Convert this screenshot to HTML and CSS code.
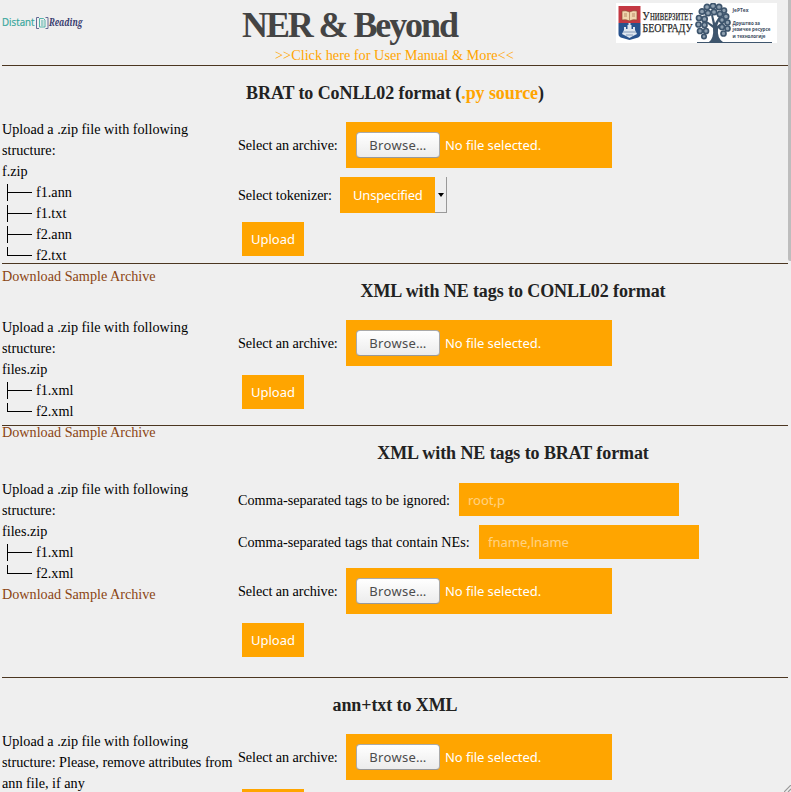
FILE: index.html
```
<!DOCTYPE html>
<html lang="en">
<head>
<meta charset="utf-8">
<title>NER &amp; Beyond</title>
<link rel="stylesheet" href="styles.css">
</head>
<body>
<header class="top">
  <a class="distant"><svg width="90" height="18" viewBox="0 0 90 18">
    <text class="d1" x="0" y="12" textLength="32.500" lengthAdjust="spacingAndGlyphs">Distant</text>
    <path d="M37 3.500h-2.500v11H37M43.500 3.500H46v11h-2.500" fill="none" stroke="#666994"/>
    <path d="M37.500 4.500h4l1.500 1.500v7h-5.500zM39 7h2.500M39 9h2.500M39 11h2.500" fill="none" stroke="#42aaa2" stroke-width=".9"/>
    <text class="d2" x="47" y="12" textLength="33.500" lengthAdjust="spacingAndGlyphs">Reading</text>
  </svg></a>
  <div class="brand"><h1>NER &amp; Beyond</h1><a class="manual">&gt;&gt;Click here for User Manual &amp; More&lt;&lt;</a></div>
  <svg class="partners" width="161" height="40" viewBox="0 0 161 40">
    <path fill="#fff" d="M0 0h161v40H0z"/>
    <path fill="#c43842" d="M2.500 3h22v17h-22z"/>
    <path fill="#28528d" d="M2.500 20h22v11q0 3-4 4l-7 2-7-2q-4-1-4-4z"/>
    <path fill="#f0d6ae" stroke="#8c4a32" stroke-width=".7" d="M6 8q4-1 7.500 1Q17 7 21 8v9q-4-1-7.500 1Q10 16 6 17z"/>
    <path d="M13.500 9v9M8 11h3M8 13h3M16 11h3M16 13h3" stroke="#a46c48" stroke-width=".7"/>
    <path fill="#dfe6ef" d="M6 31l2-4v-3h2v2h1.500v-4h1v-2h2v2h1v4H17v-2h2v3l2 4-4 2-3.500 2-3.500-2z"/>
    <path d="M7 29h13M10 32h7" stroke="#8298b7"/>
    <text class="uni" x="26.500" y="17" font-size="12" textLength="7" lengthAdjust="spacingAndGlyphs">У</text>
    <text class="uni" x="34" y="17" font-size="10" textLength="42.500" lengthAdjust="spacingAndGlyphs">НИВЕРЗИТЕТ</text>
    <text class="uni" x="26.500" y="28.500" font-size="13" textLength="50" lengthAdjust="spacingAndGlyphs">БЕОГРАДУ</text>
    <path fill="#3e556d" d="M93 39q5-4 4-14l-9-7 1-1 8 5-2-10h2l2 8 5-8 1 1-4 10 8-6 1 1-8 8q-1 9 5 13z"/>
    <g fill="#8fa0b0" stroke="#3e556d" stroke-width="1.700">
      <circle cx="91" cy="4" r="2.700"/><circle cx="97" cy="3" r="2.700"/><circle cx="103" cy="4" r="2.700"/><circle cx="108" cy="7.500" r="2.500"/>
      <circle cx="86" cy="8.500" r="2.700"/><circle cx="92" cy="10" r="2.700"/><circle cx="98" cy="9" r="2.700"/><circle cx="104" cy="11" r="2.700"/><circle cx="110" cy="13.500" r="2.700"/>
      <circle cx="83" cy="15" r="2.500"/><circle cx="88.500" cy="16" r="2.700"/><circle cx="106" cy="17" r="2.500"/><circle cx="111.500" cy="19.500" r="2.500"/>
      <circle cx="82.500" cy="21.500" r="2.500"/><circle cx="88.500" cy="22" r="2.500"/><circle cx="106" cy="24" r="2.500"/><circle cx="111.500" cy="25.500" r="2.500"/><circle cx="84" cy="28" r="2.500"/><circle cx="90" cy="28" r="2.500"/><circle cx="107.500" cy="30.500" r="2.500"/><circle cx="88" cy="33.500" r="2.200"/>
    </g>
    <path d="M81 39.500h75" stroke="#3e556d"/>
    <g class="society"><text x="116.500" y="9" textLength="16" lengthAdjust="spacingAndGlyphs">ЈеРТех</text><text x="116.500" y="21.500" textLength="27.500" lengthAdjust="spacingAndGlyphs">Друштво за</text><text x="116.500" y="28" textLength="38" lengthAdjust="spacingAndGlyphs">језичке ресурсе</text><text x="116.500" y="34.500" textLength="33" lengthAdjust="spacingAndGlyphs">и технологије</text></g>
  </svg>
</header>
<main>
  <section class="tool tokenized">
    <h3>BRAT to CoNLL02 format (<a>.py source</a>)</h3>
    <div class="info">Upload a .zip file with following structure:<br>f.zip
      <ul><li>f1.ann</li><li>f1.txt</li><li>f2.ann</li><li>f2.txt</li></ul><a>Download Sample Archive</a></div>
    <form>
      <div class="row file"><label>Select an archive:</label><div class="picker"><span class="browse"><span>Browse…</span></span><span class="none">No file selected.</span></div></div>
      <div class="row choice"><label>Select tokenizer:</label><div class="select"><span>Unspecified</span><i></i></div></div>
      <button type="button"><span>Upload</span></button>
    </form>
  </section>
  <section class="tool conll shifted">
    <h3>XML with NE tags to CONLL02 format</h3>
    <div class="info">Upload a .zip file with following structure:<br>files.zip
      <ul><li>f1.xml</li><li>f2.xml</li></ul><a>Download Sample Archive</a></div>
    <form>
      <div class="row file"><label>Select an archive:</label><div class="picker"><span class="browse"><span>Browse…</span></span><span class="none">No file selected.</span></div></div>
      <button type="button"><span>Upload</span></button>
    </form>
  </section>
  <section class="tool brat shifted">
    <h3>XML with NE tags to BRAT format</h3>
    <div class="info">Upload a .zip file with following structure:<br>files.zip
      <ul><li>f1.xml</li><li>f2.xml</li></ul><a>Download Sample Archive</a></div>
    <form>
      <div class="row ignored"><label>Comma-separated tags to be ignored:</label><input placeholder="root,p"></div>
      <div class="row names"><label>Comma-separated tags that contain NEs:</label><input placeholder="fname,lname"></div>
      <div class="row file"><label>Select an archive:</label><div class="picker"><span class="browse"><span>Browse…</span></span><span class="none">No file selected.</span></div></div>
      <button type="button"><span>Upload</span></button>
    </form>
  </section>
  <section class="tool last">
    <h3>ann+txt to XML</h3>
    <div class="info">Upload a .zip file with following structure: Please, remove attributes from ann file, if any</div>
    <form>
      <div class="row file"><label>Select an archive:</label><div class="picker"><span class="browse"><span>Browse…</span></span><span class="none">No file selected.</span></div></div>
      <button type="button" aria-label="Upload"></button>
    </form>
  </section>
</main>
<div class="scroll"></div>
<svg class="grip" width="7" height="7" viewBox="0 0 7 7"><path d="M0 7L7 0M4 7l3-3" stroke="#999" stroke-width="1.200"/></svg>
</body>
</html>
```
FILE: styles.css
```
* { box-sizing: border-box; }
html, body { height: 792px; overflow: hidden; }
body { margin: 0; padding: 0 3px 0 2px; position: relative; background: #efefef; color: #000; font: 14.2px/21px "Liberation Serif", serif; }
.top { height: 66px; border-bottom: 1px solid #4b3621; display: grid; grid-template-columns: 240px 1fr 170px; }
.distant { padding-top: 14px; line-height: 0; }
.d1 { font: 10px "Open Sans", sans-serif; fill: #35a69b; stroke: #35a69b; stroke-width: .2; }
.d2 { font: italic bold 10px "Noto Serif", "Liberation Serif", serif; fill: #393d70; }
.brand h1 { margin: 0; height: 45px; padding-top: 5px; font-size: 36px; line-height: 40px; letter-spacing: -2.1px; color: #444; white-space: nowrap; }
.manual { display: block; margin-left: 33px; color: orange; white-space: nowrap; font-size: 14.3px; }
.partners { margin: 3px 11px 0 0; justify-self: end; }
.uni { font-family: "Liberation Serif", serif; fill: #252525; stroke: #252525; stroke-width: .25; }
.society { font: bold 5px "Open Sans", sans-serif; fill: #3e4d61; }
.tool { border-bottom: 1px solid #4b3621; display: grid; grid-template-columns: 236px 1fr; grid-template-rows: 53px 1fr; }
.tokenized { height: 198px; }
.conll { height: 162px; }
.brat { height: 252px; }
.last { height: 114px; border: 0; overflow: hidden; }
h3 { grid-column: 1 / 3; margin: 0; padding-top: 16px; text-align: center; font-size: 18px; letter-spacing: -.09px; line-height: 22px; color: #222; }
h3 a { color: orange; }
.shifted h3 { grid-column: 2; }
.shifted .info { grid-column: 1; grid-row: 2; }
.info { height: 0; }
.info a { color: #8b4513; }
ul { list-style: none; margin: 0; padding: 0; }
li { position: relative; padding-left: 34px; height: 21px; }
li::before { content: ""; position: absolute; left: 5px; top: 2px; width: 1px; height: 17px; background: #000; }
li:last-child::before { height: 9px; }
li::after { content: ""; position: absolute; left: 5px; top: 10px; width: 25px; height: 1px; background: #000; }
form { grid-column: 2; padding-top: 3px; display: flex; flex-direction: column; align-items: flex-start; gap: 9px; }
.brat form { padding-top: 4px; }
.row { display: flex; align-items: center; white-space: nowrap; }
.row label { flex: none; }
.file { height: 46px; flex: none; }
.file label { width: 108px; letter-spacing: -.06px; }
.choice { height: 36px; }
.choice label { width: 102px; letter-spacing: -.06px; }
.ignored { height: 33px; }
.ignored label { width: 221px; padding-top: 1px; }
.names { height: 34px; }
.names label { width: 241px; }
.picker, .select, button, input { font: 13px/18px "Noto Sans", sans-serif; color: #fff; background: orange; border: 0; border-radius: 0; }
.picker { width: 266px; height: 46px; padding: 0 10px; display: flex; align-items: center; gap: 5px; }
.none { letter-spacing: -.05px; }
.browse { width: 84px; height: 26px; display: flex; align-items: center; justify-content: center; letter-spacing: .3px; color: #4c4c4c; background: linear-gradient(#fff, #ececec); border: 1px solid #aaa; border-bottom-color: #999; border-radius: 4px; }
.select { width: 107px; height: 36px; background: transparent; display: flex; border: solid #999; border-width: 0 1px 1px 0; }
.select span { width: 95px; height: 36px; line-height: 36px; padding-left: 13px; background: orange; letter-spacing: -.2px; }
.select i { margin: 16px 0 0 3px; width: 0; height: 0; border: solid transparent; border-width: 4px 3.5px 0; border-top-color: #000; }
input { width: 220px; height: 100%; padding: 0 9px; }
input::placeholder { color: #fff; opacity: .5; }
button { flex: none; margin-left: 4px; width: 62px; height: 34px; padding: 0; }
.scroll { position: absolute; right: 0; top: 0; width: 3px; height: 261px; background: #bdbdbd; border-radius: 0 0 0 2px; }
.grip { position: absolute; right: 0; bottom: 0; }
```
